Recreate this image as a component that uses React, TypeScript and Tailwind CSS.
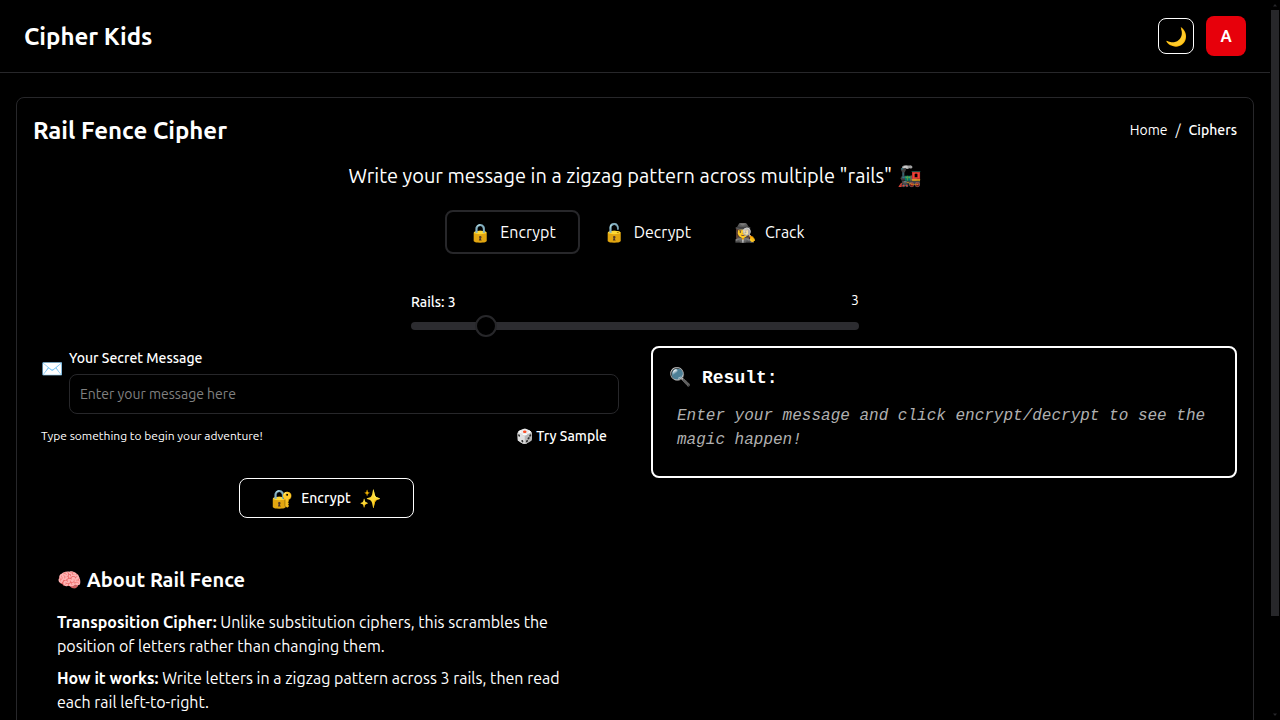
import { useState } from "react";

const tabs = [
  { id: "encrypt", label: "Encrypt", icon: "🔒" },
  { id: "decrypt", label: "Decrypt", icon: "🔓" },
  { id: "crack", label: "Crack", icon: "🕵️‍♀️" },
];

function Header() {
  return (
    <header className="flex h-[73px] shrink-0 items-center justify-between border-b border-[#27272a] px-6">
      <h1 className="text-2xl leading-[33px] font-semibold">Cipher Kids</h1>
      <div className="flex items-center gap-3">
        <button
          type="button"
          aria-label="Toggle theme"
          className="flex size-9 items-center justify-center rounded-lg border border-white text-lg"
        >
          🌙
        </button>
        <button type="button" className="size-10 rounded-lg bg-[#e7000b] font-semibold">
          A
        </button>
      </div>
    </header>
  );
}

function ModeTabs() {
  const [mode, setMode] = useState("encrypt");
  return (
    <div role="tablist" className="mt-5 flex justify-center gap-[3px]">
      {tabs.map((tab) => (
        <button
          key={tab.id}
          type="button"
          role="tab"
          aria-selected={mode === tab.id}
          onClick={() => setMode(tab.id)}
          className={`flex h-11 items-center justify-center gap-[9px] rounded-lg border-2 whitespace-nowrap ${
            mode === tab.id ? "border-[#27272a] px-[22px]" : "border-transparent px-[18px]"
          }`}
        >
          <span className="text-lg">{tab.icon}</span>
          {tab.label}
        </button>
      ))}
    </div>
  );
}

function RailSlider({ rails, onChange }: { rails: number; onChange: (n: number) => void }) {
  return (
    <div className="mx-auto mt-9 w-full max-w-md">
      <div className="flex items-start justify-between text-sm">
        <label htmlFor="rails" className="pt-[2px] font-medium">
          Rails: {rails}
        </label>
        <output htmlFor="rails">{rails}</output>
      </div>
      <input
        id="rails"
        type="range"
        min={0}
        max={20}
        value={rails}
        onChange={(e) => onChange(Number(e.target.value))}
        className="mt-[10px] block h-2 w-full appearance-none rounded-full bg-[#2c2c30] [&::-webkit-slider-thumb]:size-[22px] [&::-webkit-slider-thumb]:appearance-none [&::-webkit-slider-thumb]:rounded-full [&::-webkit-slider-thumb]:border-2 [&::-webkit-slider-thumb]:border-solid [&::-webkit-slider-thumb]:border-[#27272a] [&::-webkit-slider-thumb]:bg-black"
      />
    </div>
  );
}

function MessageForm() {
  return (
    <form onSubmit={(e) => e.preventDefault()}>
      <div className="flex items-center">
        <span className="w-9 shrink-0 pb-6 pl-2 text-lg leading-6">✉️</span>
        <div className="grow">
          <label htmlFor="message" className="block text-sm leading-6 font-medium">
            Your Secret Message
          </label>
          <input
            id="message"
            type="text"
            placeholder="Enter your message here"
            className="mt-1 block h-10 w-full rounded-lg border border-[#27272a] bg-transparent px-[10px] text-sm placeholder:text-[#808080]"
          />
        </div>
      </div>
      <div className="mt-1 flex h-9 items-center justify-between pr-3 pl-2">
        <p className="text-xs">Type something to begin your adventure!</p>
        <button type="button" className="text-sm font-medium">
          🎲 Try Sample
        </button>
      </div>
      <button
        type="submit"
        className="mx-auto mt-6 flex h-10 w-[175px] items-center justify-center gap-2 rounded-lg border border-white text-sm font-medium"
      >
        <span className="text-lg">🔐</span>
        Encrypt
        <span className="text-lg">✨</span>
      </button>
    </form>
  );
}

function ResultPanel() {
  return (
    <section className="h-[132px] rounded-lg border-2 border-white px-4 pt-4 font-['Liberation_Mono',monospace]">
      <h3 className="flex items-center gap-[11px] text-lg font-bold">
        <span>🔍</span>
        Result:
      </h3>
      <p className="mt-3 px-2 leading-6 text-[#b0b0b0] italic">
        Enter your message and click encrypt/decrypt to see the magic happen!
      </p>
    </section>
  );
}

function About({ rails }: { rails: number }) {
  return (
    <section className="px-6 pt-11 pb-20">
      <h3 className="text-xl leading-9 font-semibold">🧠 About Rail Fence</h3>
      <div className="mt-3 flex flex-col gap-2 leading-6">
        <p>
          <strong className="font-semibold">Transposition Cipher:</strong> Unlike substitution ciphers, this scrambles
          the position of letters rather than changing them.
        </p>
        <p>
          <strong className="font-semibold">How it works:</strong> Write letters in a zigzag pattern across {rails}{" "}
          rails, then read each rail left-to-right.
        </p>
      </div>
    </section>
  );
}

function ScrollTrack() {
  return (
    <div aria-hidden="true" className="flex w-[10px] shrink-0 flex-col items-center bg-black">
      <svg viewBox="0 0 10 10" className="size-[10px] shrink-0">
        <path d="M3 6.5h4L5 4z" fill="#27272a" />
      </svg>
      <div className="flex w-full grow flex-col px-px">
        <div className="h-[86.6%] bg-[#27272a]" />
      </div>
      <svg viewBox="0 0 10 10" className="size-[10px] shrink-0">
        <path d="M3 3.5h4L5 6z" fill="#27272a" />
      </svg>
    </div>
  );
}

export default function App() {
  const [rails, setRails] = useState(3);
  return (
    <div className="flex h-screen bg-black font-[Ubuntu,Lato,sans-serif] text-white">
      <div className="min-w-0 grow overflow-y-auto [scrollbar-width:none]">
        <Header />
        <main className="px-4 py-6">
          <div className="rounded-lg border border-[#27272a] p-4">
            <div className="flex items-start justify-between">
              <h2 className="text-2xl leading-[33px] font-semibold">Rail Fence Cipher</h2>
              <nav aria-label="Breadcrumb" className="flex gap-2 text-sm leading-8">
                <a href="#home">Home</a>
                <span>/</span>
                <a href="#ciphers" className="font-medium">
                  Ciphers
                </a>
              </nav>
            </div>
            <p className="mt-[15px] text-center text-xl leading-7">
              Write your message in a zigzag pattern across multiple "rails" 🚂
            </p>
            <ModeTabs />
            <RailSlider rails={rails} onChange={setRails} />
            <div className="mt-4 grid grid-cols-2 gap-x-8">
              <div>
                <MessageForm />
                <About rails={rails} />
              </div>
              <ResultPanel />
            </div>
          </div>
        </main>
      </div>
      <ScrollTrack />
    </div>
  );
}
